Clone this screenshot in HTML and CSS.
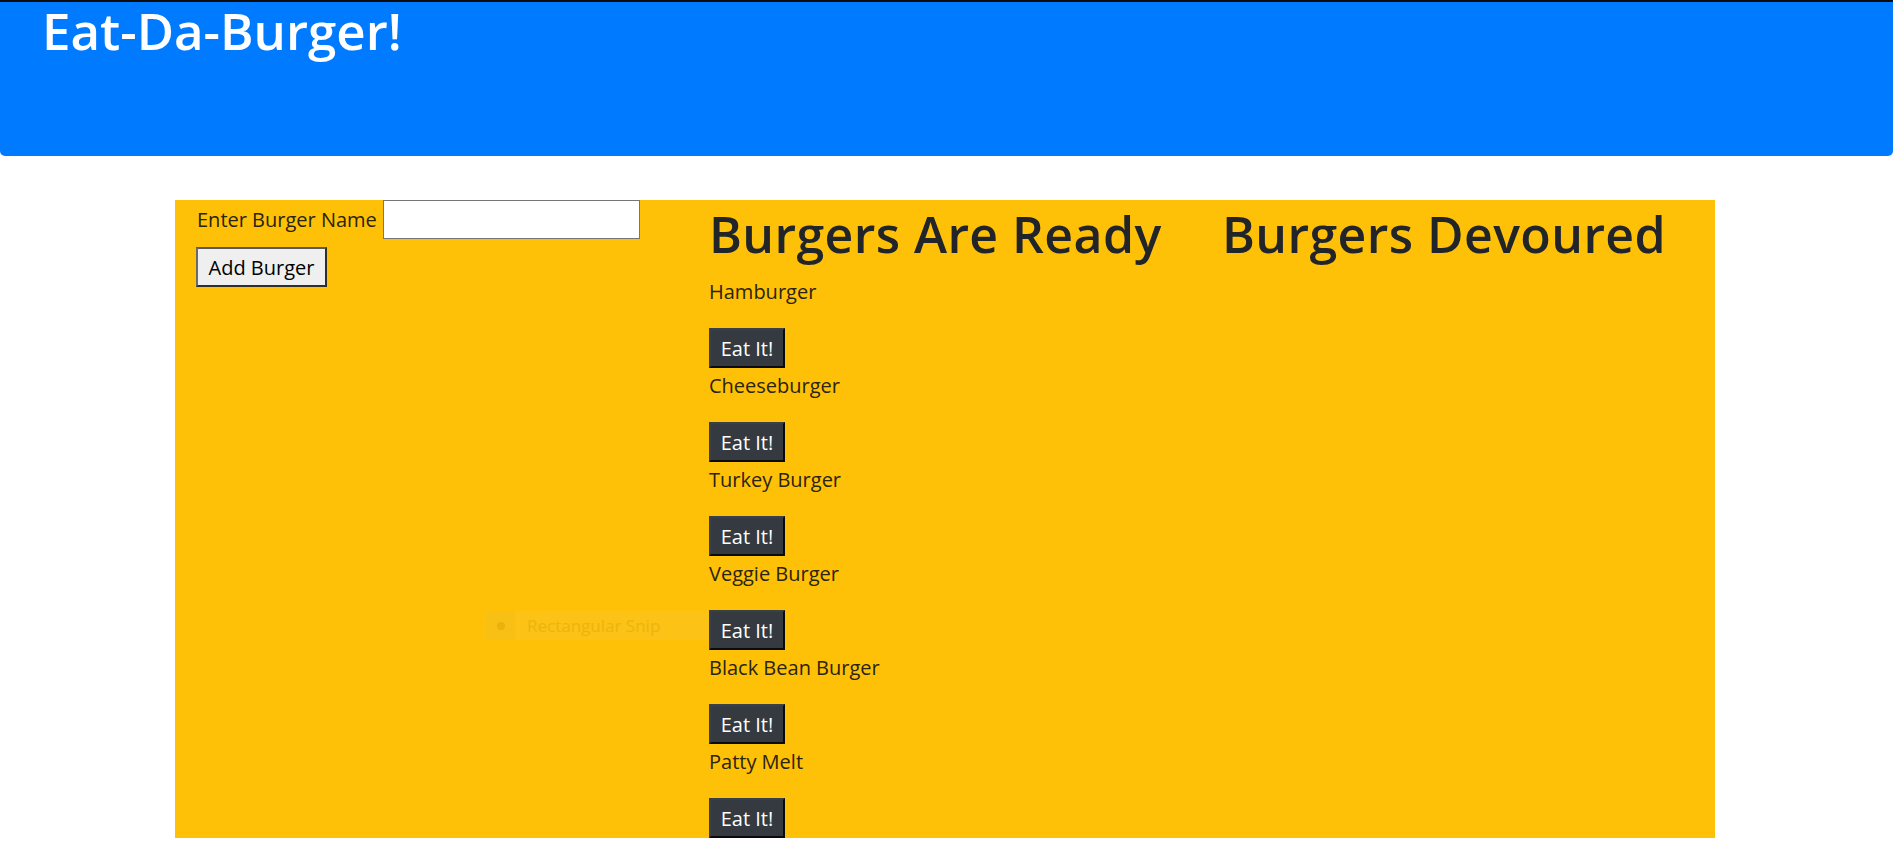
FILE: index.html
```html
<!DOCTYPE html>
<html lang="en">
<head>
<meta charset="utf-8">
<title>Eat-Da-Burger!</title>
<link rel="stylesheet" href="styles.css">
</head>
<body>
<header class="jumbotron">
  <h1 class="brand">Eat-Da-Burger!</h1>
</header>
<main class="board">
  <section class="col col-form">
    <form class="burger-form">
      <div class="field">
        <label for="burger-name" class="field-label">Enter Burger Name</label>
        <input id="burger-name" class="field-input" type="text">
      </div>
      <button type="button" class="btn-add">Add Burger</button>
    </form>
  </section>
  <section class="col col-ready">
    <h2 class="col-title">Burgers Are Ready</h2>
    <ul class="burger-list">
      <li class="burger"><p class="burger-name">Hamburger</p><button type="button" class="btn-eat">Eat It!</button></li>
      <li class="burger"><p class="burger-name">Cheeseburger</p><button type="button" class="btn-eat">Eat It!</button></li>
      <li class="burger"><p class="burger-name">Turkey Burger</p><button type="button" class="btn-eat">Eat It!</button></li>
      <li class="burger"><p class="burger-name">Veggie Burger</p><button type="button" class="btn-eat">Eat It!</button></li>
      <li class="burger"><p class="burger-name">Black Bean Burger</p><button type="button" class="btn-eat">Eat It!</button></li>
      <li class="burger"><p class="burger-name">Patty Melt</p><button type="button" class="btn-eat">Eat It!</button></li>
    </ul>
  </section>
  <section class="col col-devoured">
    <h2 class="col-title">Burgers Devoured</h2>
  </section>
</main>
<div class="snip-ghost" aria-hidden="true">
  <span class="snip-icon"><span class="snip-dot"></span></span>
  <span class="snip-text">Rectangular Snip</span>
</div>
</body>
</html>
```
FILE: styles.css
```css
* { box-sizing: border-box; }

html, body {
  margin: 0;
  padding: 0;
  background: #ffffff;
}

body {
  font-family: "Open Sans", "Noto Sans", sans-serif;
  color: #212529;
  position: relative;
}

.jumbotron {
  height: 156px;
  background: #007bff;
  border-top: 2px solid #0c0c0c;
  border-radius: 0 0 5px 5px;
  padding: 0 0 0 42px;
}

.brand {
  margin: 0;
  font-size: 51px;
  line-height: 56px;
  font-weight: 600;
  color: #ffffff;
}

.board {
  width: 1540px;
  margin: 44px 0 0 175px;
  background: #ffc107;
  display: grid;
  grid-template-columns: 515px 513px 512px;
  align-items: start;
}

.col {
  padding-left: 19px;
}

.col-form {
  padding-left: 22px;
}

.burger-form {
  display: flex;
  flex-direction: column;
  align-items: flex-start;
  gap: 8px;
}

.field {
  display: flex;
  align-items: center;
  gap: 6px;
}

.field-label {
  font-size: 20px;
  line-height: 30px;
  color: #2a2410;
}

.field-input {
  width: 257px;
  height: 39px;
  border: 1px solid #767676;
  background: #ffffff;
  margin: 0;
  padding: 0 4px;
  font: inherit;
}

.btn-add {
  width: 131px;
  height: 40px;
  margin-left: -1px;
  padding: 0;
  font-family: inherit;
  font-size: 20px;
  color: #000000;
  background: #efefef;
  border: 2px solid;
  border-color: #5a5a5a #2e2e2e #2e2e2e #6a6a6a;
}

.col-title {
  margin: 4px 0 10px;
  font-size: 50px;
  line-height: 60px;
  font-weight: 600;
  color: #212529;
  letter-spacing: 0.4px;
  white-space: nowrap;
}

.burger-list {
  list-style: none;
  margin: 0;
  padding: 0;
}

.burger-name {
  margin: 0 0 21px;
  padding-top: 3px;
  font-size: 20px;
  line-height: 30px;
  color: #2a2410;
}

.btn-eat {
  display: block;
  width: 76px;
  height: 40px;
  padding: 0;
  font-family: inherit;
  font-size: 20px;
  color: #ffffff;
  background: #343a40;
  border: 2px solid;
  border-color: #3a4047 #0a0a0a #0a0a0a #3a4047;
}

.snip-ghost {
  position: absolute;
  left: 486px;
  top: 611px;
  width: 223px;
  height: 29px;
  background: #fcc216;
  display: flex;
  align-items: center;
  gap: 12px;
}

.snip-icon {
  width: 29px;
  height: 29px;
  background: #f8bf14;
  display: flex;
  align-items: center;
  justify-content: center;
}

.snip-dot {
  width: 8px;
  height: 8px;
  border-radius: 50%;
  background: #eab20c;
}

.snip-text {
  font-size: 17px;
  color: #ebb410;
}
```
